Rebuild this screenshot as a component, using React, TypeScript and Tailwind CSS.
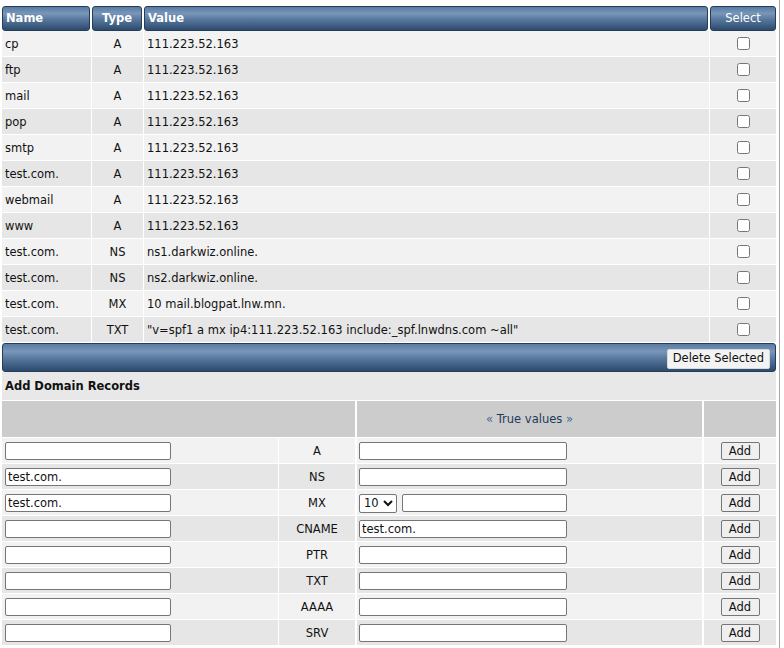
import React from 'react';

const records: [string, string, string][] = [
  ['cp', 'A', '111.223.52.163'],
  ['ftp', 'A', '111.223.52.163'],
  ['mail', 'A', '111.223.52.163'],
  ['pop', 'A', '111.223.52.163'],
  ['smtp', 'A', '111.223.52.163'],
  ['test.com.', 'A', '111.223.52.163'],
  ['webmail', 'A', '111.223.52.163'],
  ['www', 'A', '111.223.52.163'],
  ['test.com.', 'NS', 'ns1.darkwiz.online.'],
  ['test.com.', 'NS', 'ns2.darkwiz.online.'],
  ['test.com.', 'MX', '10 mail.blogpat.lnw.mn.'],
  ['test.com.', 'TXT', '"v=spf1 a mx ip4:111.223.52.163 include:_spf.lnwdns.com ~all"'],
];

const addRows: { type: string; name: string; value: string }[] = [
  { type: 'A', name: '', value: '' },
  { type: 'NS', name: 'test.com.', value: '' },
  { type: 'MX', name: 'test.com.', value: '' },
  { type: 'CNAME', name: '', value: 'test.com.' },
  { type: 'PTR', name: '', value: '' },
  { type: 'TXT', name: '', value: '' },
  { type: 'AAAA', name: '', value: '' },
  { type: 'SRV', name: '', value: '' },
];

const blue =
  'bg-[linear-gradient(to_bottom,#5a7ba1_0%,#7896b8_28%,#56779d_55%,#2d4a6c_100%)] border border-[#243d5a] rounded-[3px]';

const inputCls =
  'h-[18px] rounded-[2px] border border-[#767676] bg-white px-[2px] text-[11.5px] text-[#111] outline-none';

function HeadCell({ children, align = 'left', bold = true }: { children: React.ReactNode; align?: 'left' | 'center'; bold?: boolean }) {
  return (
    <div
      className={`${blue} flex h-[25px] items-center px-[3px] pt-[1px] text-[11.5px] text-white ${bold ? 'font-bold' : ''} ${
        align === 'center' ? 'justify-center' : ''
      }`}
    >
      {children}
    </div>
  );
}

export default function App() {
  return (
    <div className="min-h-[648px] w-[780px] border-r border-[#a8a8a8] bg-white pl-[2px] pt-[6px] font-['DejaVu_Sans','Verdana',sans-serif] text-[11.5px] text-[#111]">
      {/* Existing records */}
      <table className="w-[774px] table-fixed border-separate border-spacing-0">
        <colgroup>
          <col className="w-[90px]" />
          <col className="w-[52px]" />
          <col className="w-[566px]" />
          <col className="w-[66px]" />
        </colgroup>
        <thead>
          <tr>
            <th className="p-0 pr-[2px] text-left font-normal">
              <HeadCell>Name</HeadCell>
            </th>
            <th className="p-0 pr-[2px] font-normal">
              <HeadCell align="center">Type</HeadCell>
            </th>
            <th className="p-0 pr-[2px] text-left font-normal">
              <HeadCell>Value</HeadCell>
            </th>
            <th className="p-0 font-normal">
              <HeadCell align="center" bold={false}>
                Select
              </HeadCell>
            </th>
          </tr>
        </thead>
        <tbody>
          {records.map(([name, type, value], i) => {
            const bg = i % 2 === 0 ? 'bg-[#f2f2f2]' : 'bg-[#e6e6e6]';
            return (
              <tr key={i} className={bg}>
                <td className="h-[26px] border-b border-r border-white px-[3px] pt-[2px]">{name}</td>
                <td className="h-[26px] border-b border-r border-white px-[3px] pt-[2px] text-center">{type}</td>
                <td className="h-[26px] border-b border-r border-white px-[3px] pt-[2px] whitespace-nowrap">{value}</td>
                <td className="h-[26px] border-b border-white text-center">
                  <input type="checkbox" className="m-0 h-[13px] w-[13px] align-middle" />
                </td>
              </tr>
            );
          })}
          <tr>
            <td colSpan={4} className="p-0">
              <div className={`${blue} flex h-[29px] items-center justify-end pr-[5px] pt-[2px]`}>
                <button className="h-[20px] rounded-[2px] border border-[#d8d8d8] bg-[#f3f3f3] px-[5px] text-[11.5px] text-[#111]">
                  Delete Selected
                </button>
              </div>
            </td>
          </tr>
        </tbody>
      </table>

      <div className="flex h-[29px] w-[774px] items-center border-b border-white bg-[#e8e8e8] px-[3px] pt-[1px] font-bold">
        Add Domain Records
      </div>

      {/* Add new records */}
      <table className="w-[774px] table-fixed border-separate border-spacing-0">
        <colgroup>
          <col className="w-[277px]" />
          <col className="w-[78px]" />
          <col className="w-[347px]" />
          <col className="w-[72px]" />
        </colgroup>
        <thead>
          <tr className="bg-[#cccccc]">
            <th colSpan={2} className="h-[37px] border-b border-r-2 border-white"></th>
            <th className="h-[37px] border-b border-r-2 border-white pt-[2px] text-center font-normal text-[#1c3b5c]">
              <span className="text-[#4a6a8c]">«</span> True values <span className="text-[#4a6a8c]">»</span>
            </th>
            <th className="h-[37px] border-b border-white"></th>
          </tr>
        </thead>
        <tbody>
          {addRows.map((r, i) => {
            const bg = i % 2 === 0 ? 'bg-[#f2f2f2]' : 'bg-[#e6e6e6]';
            return (
              <tr key={r.type} className={bg}>
                <td className="h-[26px] border-b border-r border-white pl-[3px] pt-[1px]">
                  <input className={`${inputCls} block w-[166px]`} defaultValue={r.name} />
                </td>
                <td className="h-[26px] border-b border-r-2 border-white pt-[2px] text-center">{r.type}</td>
                <td className="h-[26px] border-b border-r-2 border-white pl-[2px] pt-[1px]">
                  {r.type === 'MX' ? (
                    <div className="flex items-center gap-[5px]">
                      <select className="h-[19px] w-[38px] rounded-[2px] border border-[#767676] bg-white text-[11.5px] text-[#111]" defaultValue="10">
                        <option value="10">10</option>
                        <option value="20">20</option>
                        <option value="30">30</option>
                      </select>
                      <input className={`${inputCls} block w-[165px]`} defaultValue="" />
                    </div>
                  ) : (
                    <input className={`${inputCls} block w-[208px]`} defaultValue={r.value} />
                  )}
                </td>
                <td className="h-[26px] border-b border-white pt-[1px] text-center">
                  <button className="h-[18px] w-[39px] rounded-[2px] border border-[#767676] bg-[#efefef] pt-[1px] text-[11.5px] leading-none text-[#111]">
                    Add
                  </button>
                </td>
              </tr>
            );
          })}
        </tbody>
      </table>
    </div>
  );
}
